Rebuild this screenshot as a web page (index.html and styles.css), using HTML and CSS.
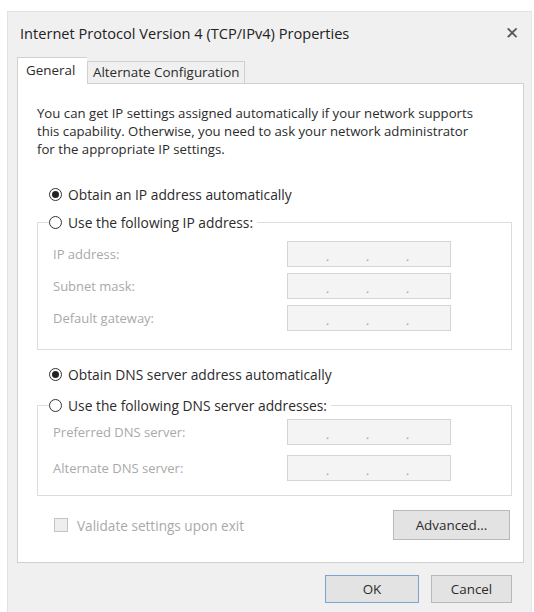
FILE: index.html
```html
<!DOCTYPE html>
<html lang="en">
<head>
  <meta charset="UTF-8">
  <meta name="viewport" content="width=device-width, initial-scale=1.0">
  <title>Internet Protocol Version 4 (TCP/IPv4) Properties</title>
  <link rel="stylesheet" href="styles.css">
</head>
<body>
  <div class="window">
    <div class="titlebar">
      <span class="title">Internet Protocol Version 4 (TCP/IPv4) Properties</span>
      <span class="close">&#x2715;</span>
    </div>

    <div class="tabs">
      <div class="tab active">General</div>
      <div class="tab">Alternate Configuration</div>
    </div>

    <div class="panel">
      <p class="intro">You can get IP settings assigned automatically if your network supports<br>this capability. Otherwise, you need to ask your network administrator<br>for the appropriate IP settings.</p>

      <label class="radio-row first">
        <span class="radio checked"></span>Obtain an IP address automatically
      </label>

      <fieldset class="group">
        <legend><label class="radio-row"><span class="radio"></span>Use the following IP address:</label></legend>
        <div class="field-row">
          <span class="field-label">IP address:</span>
          <div class="ip-box"><span></span><i>.</i><span></span><i>.</i><span></span><i>.</i><span></span></div>
        </div>
        <div class="field-row">
          <span class="field-label">Subnet mask:</span>
          <div class="ip-box"><span></span><i>.</i><span></span><i>.</i><span></span><i>.</i><span></span></div>
        </div>
        <div class="field-row">
          <span class="field-label">Default gateway:</span>
          <div class="ip-box"><span></span><i>.</i><span></span><i>.</i><span></span><i>.</i><span></span></div>
        </div>
      </fieldset>

      <label class="radio-row dns-first">
        <span class="radio checked"></span>Obtain DNS server address automatically
      </label>

      <fieldset class="group dns">
        <legend><label class="radio-row"><span class="radio"></span>Use the following DNS server addresses:</label></legend>
        <div class="field-row">
          <span class="field-label">Preferred DNS server:</span>
          <div class="ip-box"><span></span><i>.</i><span></span><i>.</i><span></span><i>.</i><span></span></div>
        </div>
        <div class="field-row">
          <span class="field-label">Alternate DNS server:</span>
          <div class="ip-box"><span></span><i>.</i><span></span><i>.</i><span></span><i>.</i><span></span></div>
        </div>
      </fieldset>

      <div class="bottom-row">
        <label class="check-row"><span class="checkbox"></span>Validate settings upon exit</label>
        <button class="btn advanced">Advanced...</button>
      </div>
    </div>

    <div class="footer">
      <button class="btn default">OK</button>
      <button class="btn cancel">Cancel</button>
    </div>
  </div>
</body>
</html>
```

FILE: styles.css
```css
* {
  margin: 0;
  padding: 0;
  box-sizing: border-box;
}

:root {
  --window-bg: #f0f0f0;
  --text-color: #2b2b2b;
  --disabled-text: #a9a9a9;
  --line-color: #dcdcdc;
}

body {
  background: #fff;
  font-family: 'Open Sans', 'Noto Sans', sans-serif;
  font-size: 13.4px;
  color: var(--text-color);
}

.window {
  margin: 11px 0 0 7px;
  width: 525px;
  height: 601px;
  background: var(--window-bg);
  border-top: 1px solid #e2e2e2;
  border-left: 1px solid #e2e2e2;
  border-right: 1px solid #e6e6e6;
  display: flex;
  flex-direction: column;
}

.titlebar {
  height: 45px;
  display: flex;
  align-items: center;
  justify-content: space-between;
  padding: 0 12px 4px 12px;
}

.title {
  font-size: 14.6px;
  color: #222;
}

.close {
  font-size: 17px;
  color: #555;
}

/* tab strip */
.tabs {
  display: flex;
  align-items: flex-end;
  padding-left: 9px;
  height: 26px;
}

.tab {
  height: 22px;
  line-height: 20px;
  padding: 0 5px;
  font-size: 13.4px;
  background: var(--window-bg);
  border: 1px solid #d0d0d0;
  border-bottom: none;
}

.tab.active {
  height: 27px;
  line-height: 24px;
  margin-bottom: -1px;
  background: #fff;
  border-right: none;
  width: 70px;
  padding: 0 8px;
  position: relative;
  z-index: 1;
}

.panel {
  margin-left: 9px;
  width: 507px;
  height: 480px;
  background: #fff;
  border: 1px solid #d0d0d0;
  padding: 20px 11px 0 19px;
}

.intro {
  font-size: 13.2px;
  line-height: 18px;
  white-space: nowrap;
}

.radio-row {
  display: flex;
  align-items: center;
  height: 20px;
  font-size: 13.8px;
}

.radio-row.first {
  margin: 26px 0 0 12px;
}

.radio-row.dns-first {
  margin: 14px 0 0 12px;
}

.radio {
  width: 13px;
  height: 13px;
  border: 1px solid #333;
  border-radius: 50%;
  margin-right: 6px;
  display: flex;
  align-items: center;
  justify-content: center;
  background: #fff;
}

.radio.checked::after {
  content: "";
  width: 7px;
  height: 7px;
  border-radius: 50%;
  background: #222;
}

.group {
  margin-top: 8px;
  border: 1px solid var(--line-color);
  padding: 9px 0 18px 11px;
}

.group legend {
  padding-right: 4px;
}

.field-row {
  display: flex;
  align-items: center;
  height: 26px;
  margin-bottom: 6px;
  padding-left: 4px;
}

.field-row:last-child {
  margin-bottom: 0;
}

.field-label {
  width: 234px;
  color: var(--disabled-text);
  font-size: 13px;
}

.ip-box {
  width: 164px;
  height: 26px;
  background: #f4f4f4;
  border: 1px solid #d4d4d4;
  display: flex;
  align-items: center;
  padding: 4px 0 0 0;
}

.ip-box span {
  width: 38px;
}

.ip-box i {
  font-style: normal;
  width: 2px;
  color: #999;
  font-size: 12px;
  text-align: center;
}

.group.dns {
  margin-top: 11px;
  padding-top: 4px;
  padding-bottom: 14px;
}

.group.dns .field-row {
  margin-bottom: 10px;
}

.group.dns .field-row:last-child {
  margin-bottom: 0;
}

.bottom-row {
  display: flex;
  justify-content: space-between;
  align-items: center;
  margin-top: 14px;
  padding-left: 17px;
}

.check-row {
  display: flex;
  align-items: center;
  color: var(--disabled-text);
  font-size: 13.6px;
}

.checkbox {
  width: 14px;
  height: 14px;
  border: 1px solid #c4c4c4;
  background: #eeeeee;
  margin-right: 9px;
}

.btn {
  font-family: inherit;
  font-size: 13.4px;
  color: #2b2b2b;
  background: #e3e3e3;
  border: 1px solid #b9b9b9;
  height: 30px;
}

.btn.advanced {
  width: 117px;
  margin-right: 2px;
}

.footer {
  display: flex;
  justify-content: flex-end;
  gap: 12px;
  padding: 12px 19px 0 0;
}

.btn.default {
  width: 94px;
  height: 28px;
  border-color: #7aa5cf;
}

.btn.cancel {
  width: 81px;
  height: 28px;
}
```
